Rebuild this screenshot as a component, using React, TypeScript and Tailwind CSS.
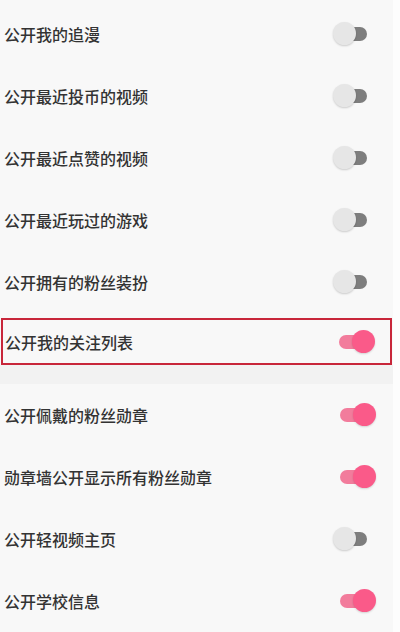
import React from "react";

function Toggle({ on }: { on: boolean }) {
  return (
    <div className="relative w-[42px] h-[24px] shrink-0">
      {on ? (
        <>
          <div className="absolute left-[7px] top-[5px] w-[32px] h-[14px] rounded-full bg-[#f27c9c]" />
          <div className="absolute left-[20px] top-0 w-[23px] h-[23px] rounded-full bg-[#fa5a89] shadow-[0_1px_2px_rgba(0,0,0,0.15)]" />
        </>
      ) : (
        <>
          <div className="absolute left-[2px] top-[5px] w-[32px] h-[14px] rounded-full bg-[#7e7e7e]" />
          <div className="absolute left-0 top-0 w-[23px] h-[23px] rounded-full bg-[#e6e6e6] shadow-[0_1px_2px_rgba(0,0,0,0.18)]" />
        </>
      )}
    </div>
  );
}

function Row({ label, on }: { label: string; on: boolean }) {
  return (
    <div className="h-[62px] flex items-center justify-between pl-[4px] pr-[18px]">
      <span className="text-[16px] font-medium text-[#333333] leading-none">{label}</span>
      <Toggle on={on} />
    </div>
  );
}

export default function App() {
  const top = [
    { label: "公开我的追漫", on: false },
    { label: "公开最近投币的视频", on: false },
    { label: "公开最近点赞的视频", on: false },
    { label: "公开最近玩过的游戏", on: false },
    { label: "公开拥有的粉丝装扮", on: false },
  ];
  const bottom = [
    { label: "公开佩戴的粉丝勋章", on: true },
    { label: "勋章墙公开显示所有粉丝勋章", on: true },
    { label: "公开轻视频主页", on: false },
    { label: "公开学校信息", on: true },
  ];
  return (
    <div
      className="w-[400px] h-[632px] overflow-hidden flex bg-[#f8f8f8]"
      style={{ fontFamily: '"Noto Sans CJK SC", "Noto Sans", sans-serif' }}
    >
      <div className="w-[393px] flex flex-col">
        <div className="pt-[3px]">
          {top.map((r) => (
            <Row key={r.label} label={r.label} on={r.on} />
          ))}
        </div>
        <div className="pt-[5px]">
          <div className="h-[47px] ml-[1px] mr-[1px] border-2 border-[#c8263a] flex items-center justify-between pl-[2px] pr-[16px]">
            <span className="text-[16px] font-medium text-[#333333] leading-none">公开我的关注列表</span>
            <Toggle on={true} />
          </div>
        </div>
        <div className="h-[21px] bg-[#f2f2f2]" />
        <div>
          {bottom.map((r) => (
            <Row key={r.label} label={r.label} on={r.on} />
          ))}
        </div>
      </div>
      <div className="flex-1 bg-[#fdfdfd]" />
    </div>
  );
}
